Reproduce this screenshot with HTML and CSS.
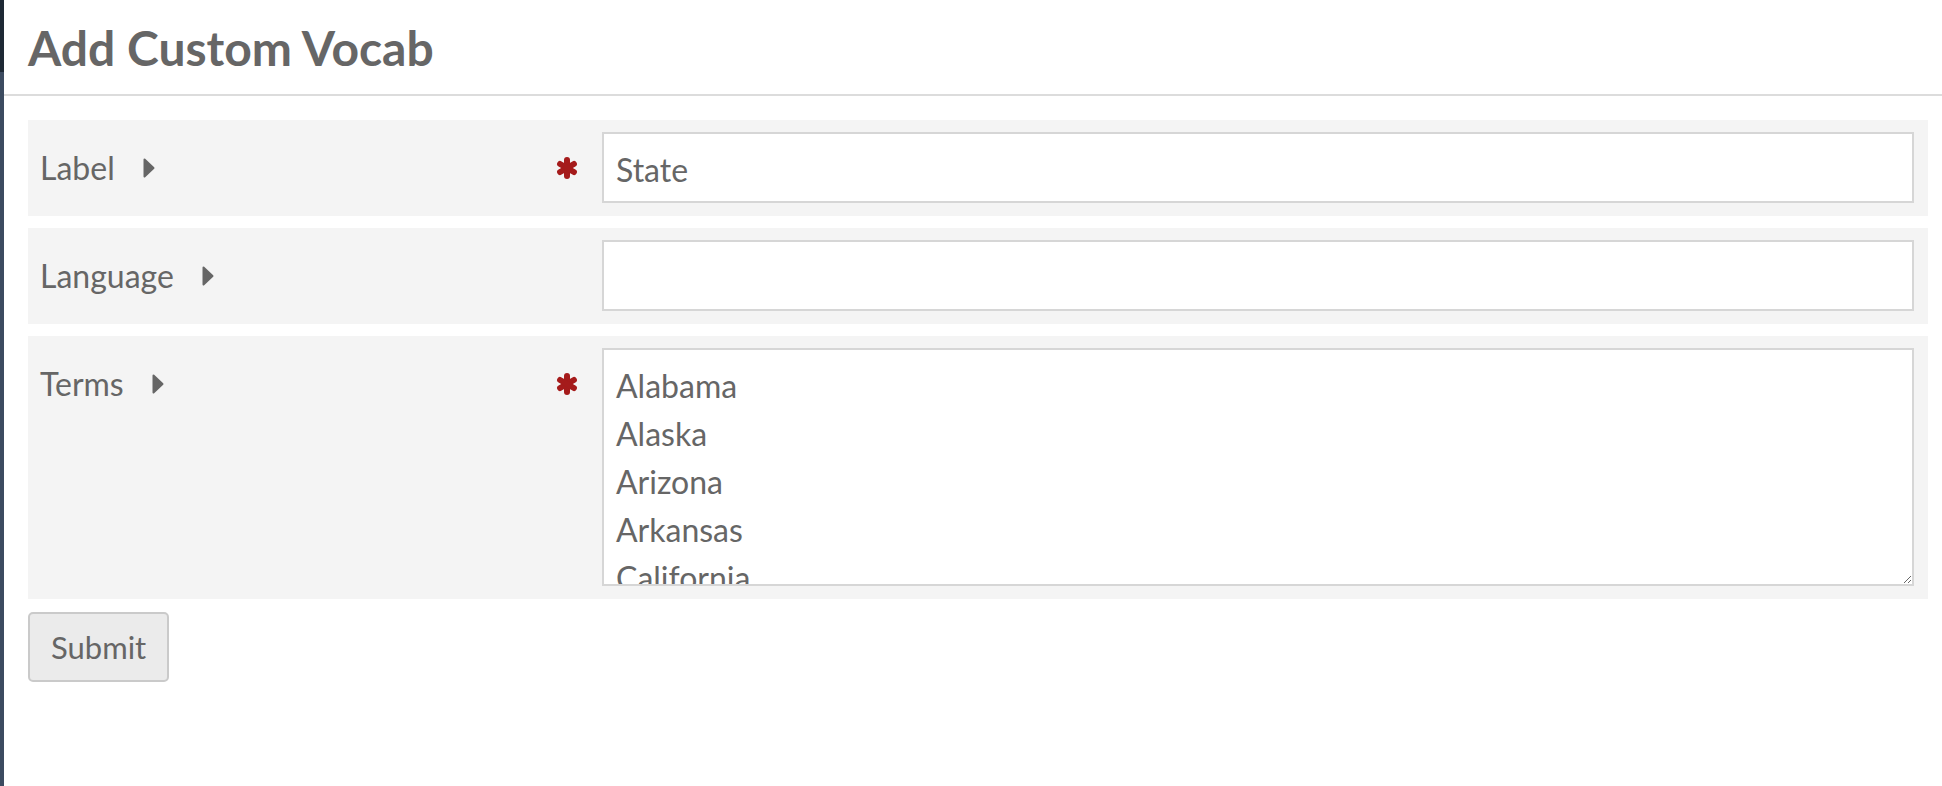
FILE: index.html
```html
<!DOCTYPE html>
<html lang="en">
<head>
<meta charset="utf-8">
<title>Add Custom Vocab</title>
<link rel="stylesheet" href="styles.css">
</head>
<body>
<div class="app">
  <aside class="sidebar"><div class="sidebar-top"></div></aside>
  <main class="main">
    <header class="page-header">
      <h1 class="page-title">Add Custom Vocab</h1>
    </header>
    <form class="vocab-form">
      <div class="field-row">
        <div class="field-label">
          <span class="label-text">Label</span>
          <svg class="caret" width="12" height="20" viewBox="0 0 12 20"><path d="M1.5 1.5 L10.5 10 L1.5 18.5 Z"/></svg>
          <svg class="required" width="22" height="22" viewBox="0 0 22 22"><g><line x1="11" y1="3" x2="11" y2="19"/><line x1="11" y1="3" x2="11" y2="19" transform="rotate(60 11 11)"/><line x1="11" y1="3" x2="11" y2="19" transform="rotate(120 11 11)"/></g></svg>
        </div>
        <div class="field-control">
          <input class="text-input" type="text" value="State">
        </div>
      </div>
      <div class="field-row">
        <div class="field-label">
          <span class="label-text">Language</span>
          <svg class="caret" width="12" height="20" viewBox="0 0 12 20"><path d="M1.5 1.5 L10.5 10 L1.5 18.5 Z"/></svg>
        </div>
        <div class="field-control">
          <input class="text-input" type="text" value="">
        </div>
      </div>
      <div class="field-row">
        <div class="field-label">
          <span class="label-text">Terms</span>
          <svg class="caret" width="12" height="20" viewBox="0 0 12 20"><path d="M1.5 1.5 L10.5 10 L1.5 18.5 Z"/></svg>
          <svg class="required" width="22" height="22" viewBox="0 0 22 22"><g><line x1="11" y1="3" x2="11" y2="19"/><line x1="11" y1="3" x2="11" y2="19" transform="rotate(60 11 11)"/><line x1="11" y1="3" x2="11" y2="19" transform="rotate(120 11 11)"/></g></svg>
        </div>
        <div class="field-control">
          <textarea class="text-area">Alabama
Alaska
Arizona
Arkansas
California
Colorado
Connecticut
Delaware
Florida
Georgia</textarea>
        </div>
      </div>
      <div class="actions">
        <button class="submit-btn" type="button">Submit</button>
      </div>
    </form>
  </main>
</div>
</body>
</html>
```

FILE: styles.css
```css
* { box-sizing: border-box; }

html, body {
  margin: 0;
  padding: 0;
  background: #ffffff;
}

body {
  font-family: Lato, "Open Sans", "Liberation Sans", sans-serif;
  color: #666666;
  font-size: 32px;
}

.app {
  display: flex;
  min-height: 786px;
}

.sidebar {
  flex: 0 0 4px;
  background: #3c4b60;
  display: flex;
  flex-direction: column;
}

.sidebar-top {
  height: 72px;
  background: #1e2935;
}

.main {
  flex: 1;
  min-width: 0;
}

.page-header {
  border-bottom: 2px solid #dcdcdc;
  padding: 19px 0 17px 24px;
}

.page-title {
  margin: 0;
  font-size: 48px;
  line-height: 58px;
  font-weight: 700;
  color: #666666;
}

.vocab-form {
  padding: 24px 14px 0 24px;
  display: flex;
  flex-direction: column;
  gap: 12px;
}

.field-row {
  display: grid;
  grid-template-columns: 1fr 1312px;
  background: #f4f4f4;
  padding: 12px 14px 13px 0;
}

.field-label {
  display: flex;
  align-items: center;
  align-self: start;
  height: 48px;
  margin-top: 12px;
  padding: 0 24px 0 12px;
  line-height: 48px;
}

.label-text {
  font-size: 32px;
}

.caret {
  margin-left: 28px;
  fill: #666666;
  stroke: #666666;
  stroke-width: 2;
  stroke-linejoin: round;
}

.required {
  margin-left: auto;
  stroke: #a51b1b;
  stroke-width: 6;
  stroke-linecap: round;
}

.field-control {
  display: flex;
}

.text-input {
  width: 100%;
  height: 71px;
  border: 2px solid #d6d6d6;
  background: #ffffff;
  padding: 4px 12px 0;
  font-family: Lato, "Open Sans", "Liberation Sans", sans-serif;
  font-size: 32px;
  color: #666666;
  outline: none;
  border-radius: 0;
}

.text-area {
  width: 100%;
  height: 238px;
  border: 2px solid #d6d6d6;
  background: #ffffff;
  padding: 12px 12px;
  font-family: Lato, "Open Sans", "Liberation Sans", sans-serif;
  font-size: 32px;
  line-height: 48px;
  color: #666666;
  overflow: hidden;
  resize: vertical;
  outline: none;
  border-radius: 0;
}

.actions {
  display: flex;
  margin-top: 1px;
}

.submit-btn {
  font-family: Lato, "Open Sans", "Liberation Sans", sans-serif;
  font-size: 31px;
  line-height: 48px;
  color: #666666;
  background: #ebebeb;
  border: 2px solid #cacaca;
  border-radius: 5px;
  padding: 9px 21px;
}
```
